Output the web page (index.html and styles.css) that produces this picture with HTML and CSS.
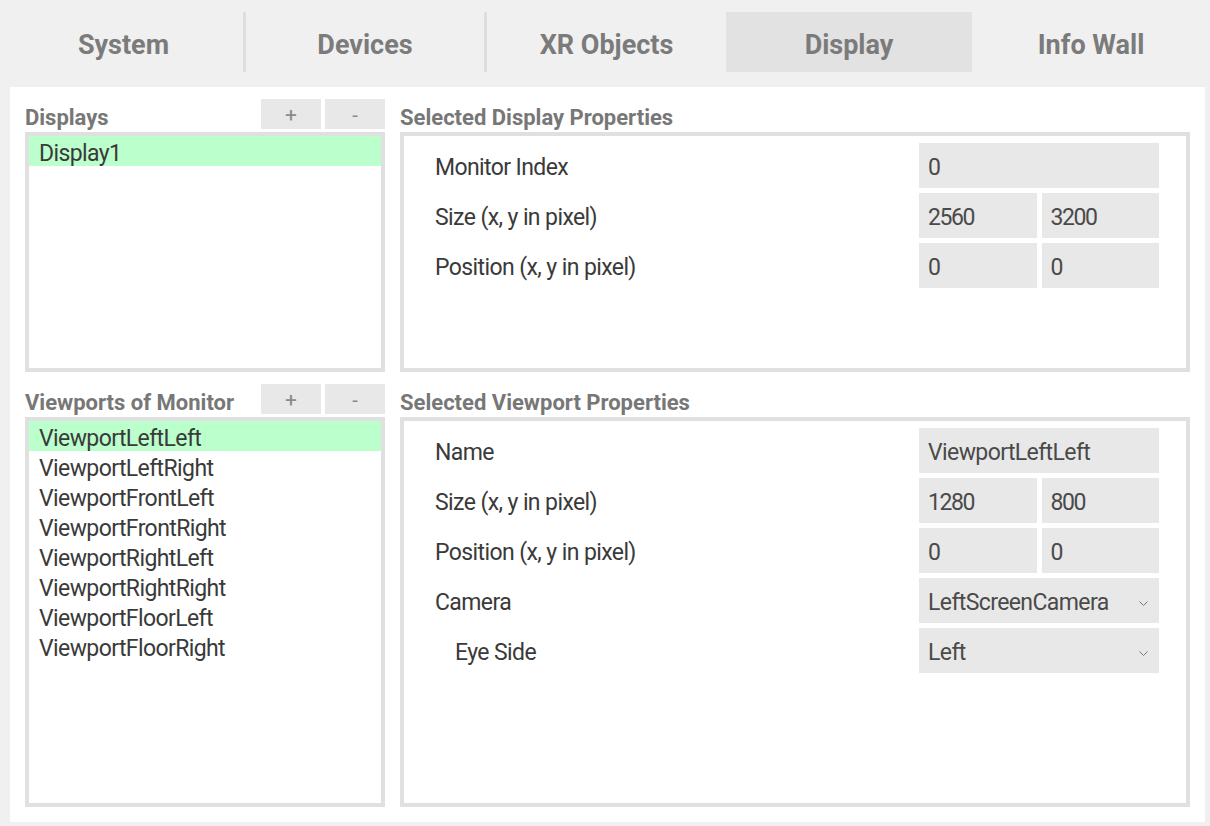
FILE: index.html
```html
<!DOCTYPE html>
<html lang="en">
<head>
<meta charset="utf-8">
<title>Display Settings</title>
<link rel="stylesheet" href="styles.css">
</head>
<body>
<nav class="tabs">
  <div class="tab tab-system">System</div>
  <div class="sep"></div>
  <div class="tab tab-devices">Devices</div>
  <div class="sep"></div>
  <div class="tab tab-xr">XR Objects</div>
  <div class="tab tab-display active">Display</div>
  <div class="tab tab-info">Info Wall</div>
</nav>

<main class="panel">
  <section class="section section-display">
    <div class="head">
      <span class="title">Displays</span>
      <div class="btns">
        <button class="btn btn-plus">+</button>
        <button class="btn btn-minus">-</button>
      </div>
    </div>
    <div class="head">
      <span class="title">Selected Display Properties</span>
    </div>
    <ul class="list">
      <li class="item selected">Display1</li>
    </ul>
    <div class="props">
      <div class="row">
        <span class="label">Monitor Index</span>
        <div class="vals"><span class="field num">0</span></div>
      </div>
      <div class="row">
        <span class="label">Size (x, y in pixel)</span>
        <div class="vals"><span class="field num">2560</span><span class="field num">3200</span></div>
      </div>
      <div class="row">
        <span class="label">Position (x, y in pixel)</span>
        <div class="vals"><span class="field num">0</span><span class="field num">0</span></div>
      </div>
    </div>
  </section>

  <section class="section section-viewport">
    <div class="head">
      <span class="title">Viewports of Monitor</span>
      <div class="btns">
        <button class="btn btn-plus">+</button>
        <button class="btn btn-minus">-</button>
      </div>
    </div>
    <div class="head">
      <span class="title">Selected Viewport Properties</span>
    </div>
    <ul class="list">
      <li class="item selected">ViewportLeftLeft</li>
      <li class="item">ViewportLeftRight</li>
      <li class="item">ViewportFrontLeft</li>
      <li class="item">ViewportFrontRight</li>
      <li class="item">ViewportRightLeft</li>
      <li class="item">ViewportRightRight</li>
      <li class="item">ViewportFloorLeft</li>
      <li class="item">ViewportFloorRight</li>
    </ul>
    <div class="props">
      <div class="row">
        <span class="label">Name</span>
        <div class="vals"><span class="field">ViewportLeftLeft</span></div>
      </div>
      <div class="row">
        <span class="label">Size (x, y in pixel)</span>
        <div class="vals"><span class="field num">1280</span><span class="field num">800</span></div>
      </div>
      <div class="row">
        <span class="label">Position (x, y in pixel)</span>
        <div class="vals"><span class="field num">0</span><span class="field num">0</span></div>
      </div>
      <div class="row">
        <span class="label">Camera</span>
        <div class="vals"><span class="field select">LeftScreenCamera<svg class="chev" width="9" height="5" viewBox="0 0 9 5"><polyline points="0.5,0.5 4.5,4.5 8.5,0.5" fill="none" stroke="#777" stroke-width="1"/></svg></span></div>
      </div>
      <div class="row">
        <span class="label sub">Eye Side</span>
        <div class="vals"><span class="field select">Left<svg class="chev" width="9" height="5" viewBox="0 0 9 5"><polyline points="0.5,0.5 4.5,4.5 8.5,0.5" fill="none" stroke="#777" stroke-width="1"/></svg></span></div>
      </div>
    </div>
  </section>
</main>
</body>
</html>
```
FILE: styles.css
```css
* { box-sizing: border-box; }

html, body {
  margin: 0;
  padding: 0;
  background: #f0f0f0;
  font-family: Roboto, "Liberation Sans", sans-serif;
  width: 1210px;
  height: 826px;
  overflow: hidden;
}

.tabs {
  display: flex;
  margin-top: 12px;
  height: 60px;
}

.tab {
  flex: none;
  text-align: center;
  font-weight: 700;
  font-size: 27px;
  color: #7b7b7b;
  padding-top: 6px;
  line-height: 54px;
}

.tab-system { width: 243px; padding-left: 4px; }
.tab-devices { width: 238px; }
.tab-xr { width: 239px; }
.tab-display { width: 246px; }
.tab-info { flex: 1; }

.tab.active {
  background: #e2e2e2;
}

.sep {
  width: 3px;
  background: #dedede;
}

.panel {
  margin: 15px 5px 0 10px;
  height: 735px;
  background: #ffffff;
  padding: 12px 15px 15px 15px;
}

.section {
  display: grid;
  grid-template-columns: 360px 1fr;
  column-gap: 15px;
  row-gap: 3px;
}

.section-display {
  grid-template-rows: 30px 240px;
}

.section-viewport {
  grid-template-rows: 30px 390px;
  margin-top: 12px;
}

.head {
  display: flex;
  align-items: flex-start;
}

.title {
  font-weight: 700;
  font-size: 22px;
  line-height: 22px;
  padding-top: 8px;
  color: #777777;
  white-space: nowrap;
}

.btns {
  margin-left: auto;
  display: flex;
  gap: 4px;
}

.btn {
  width: 60px;
  height: 30px;
  border: 0;
  margin: 0;
  padding: 2px 0 0 0;
  background: #e8e8e8;
  color: #8a8a8a;
  font-family: Roboto, "Liberation Sans", sans-serif;
  font-size: 21px;
  line-height: 28px;
  text-align: center;
}

.btn-minus {
  font-size: 20px;
}

.list {
  list-style: none;
  margin: 0;
  padding: 0;
  border: 4px solid #e0e0e0;
  background: #fff;
}

.item {
  height: 30px;
  padding: 5px 0 0 10px;
  line-height: 25px;
  font-size: 23px;
  letter-spacing: -0.6px;
  color: #3a3a3a;
  white-space: nowrap;
}

.item.selected {
  background: #bbffcc;
}

.props {
  border: 4px solid #e0e0e0;
  background: #fff;
  padding: 7px 27px 0 31px;
  display: flex;
  flex-direction: column;
  gap: 5px;
}

.row {
  display: flex;
  align-items: stretch;
  height: 45px;
}

.label {
  flex: 1;
  font-size: 23px;
  letter-spacing: -0.6px;
  color: #3a3a3a;
  padding-top: 4px;
  line-height: 41px;
  white-space: nowrap;
}

.label.sub {
  padding-left: 20px;
}

.vals {
  width: 240px;
  display: flex;
  gap: 5px;
}

.field {
  flex: 1 1 0;
  background: #e8e8e8;
  height: 45px;
  padding: 4px 0 0 9px;
  line-height: 41px;
  font-size: 23px;
  letter-spacing: -0.6px;
  color: #4a4a4a;
  white-space: nowrap;
  overflow: hidden;
}

.field.num {
  letter-spacing: -1.4px;
}

.field.select {
  display: flex;
  align-items: flex-start;
}

.chev {
  margin-left: auto;
  margin-right: 11px;
  margin-top: 19px;
  flex: none;
}
```
